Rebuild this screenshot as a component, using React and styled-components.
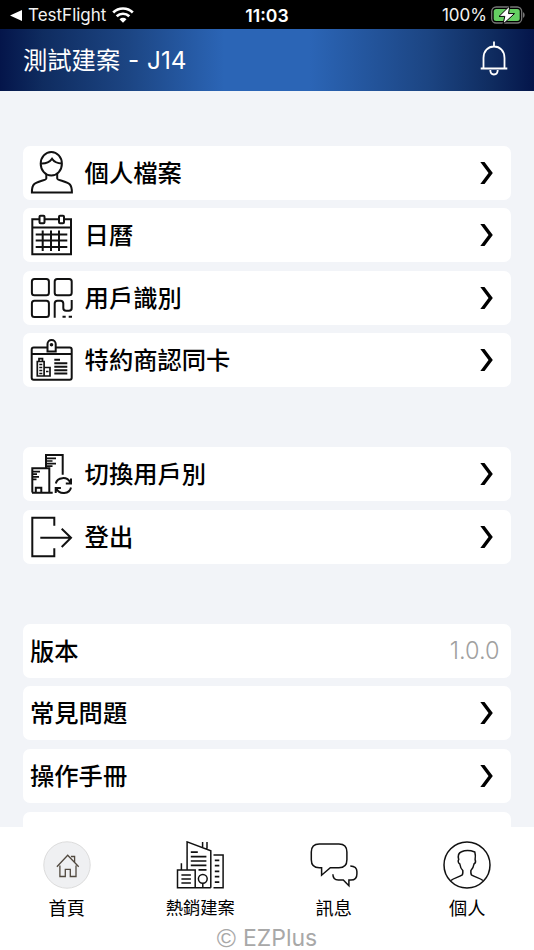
import styled, { createGlobalStyle } from "styled-components";

const GlobalStyle = createGlobalStyle`
  * {
    box-sizing: border-box;
  }
  body {
    margin: 0;
    background: #f2f4f8;
    font-family: Inter, "Noto Sans CJK TC", sans-serif;
    color: #000;
  }
`;

const Screen = styled.div`
  display: flex;
  flex-direction: column;
  height: 950px;
  overflow: hidden;
`;

const StatusBar = styled.div`
  flex: none;
  display: grid;
  grid-template-columns: 1fr auto 1fr;
  align-items: center;
  height: 29px;
  padding: 1px 9px 0 10px;
  background: #000;
  color: #fff;
  font-size: 17px;
`;

const StatusSide = styled.div`
  display: flex;
  align-items: center;
  justify-content: ${(props) => (props.$end ? "flex-end" : "flex-start")};
  gap: ${(props) => (props.$end ? "4px" : "6px")};
  color: #f2f2f2;
`;

const Time = styled.div`
  margin-right: 1px;
  font-size: 17.6px;
  font-weight: 600;
`;

const Header = styled.header`
  flex: none;
  display: flex;
  align-items: center;
  justify-content: space-between;
  height: 62px;
  padding: 0 26px 0 23px;
  background: linear-gradient(
    90deg,
    #04154a 0%,
    #0f2c60 8%,
    #1c4583 24%,
    #2b65b6 42%,
    #2b65b6 58%,
    #1c4583 80%,
    #0f2c60 92%,
    #04154a 100%
  );
`;

const Title = styled.h1`
  margin: 0;
  padding-bottom: 3px;
  color: #fff;
  font-size: 24.3px;
  font-weight: 370;
  word-spacing: 1px;
`;

const Content = styled.main`
  flex: 1;
  min-height: 0;
  overflow: hidden;
  padding: 54.7px 23px 0;
`;

const Group = styled.section`
  display: flex;
  flex-direction: column;
  gap: 8.6px;
  margin-bottom: 59.9px;
`;

const Row = styled.div`
  flex: none;
  display: flex;
  align-items: center;
  height: 54px;
  padding: 0 18.5px 0 7px;
  border-radius: 7px;
  background: #fff;
`;

const RowIcon = styled.svg`
  flex: none;
  width: 42px;
  height: 42px;
  margin-left: 0.6px;
  margin-right: 12px;
  overflow: visible;
  fill: none;
  stroke: #111;
  stroke-width: 2;
`;

const RowLabel = styled.span`
  flex: 1;
  font-size: 24.3px;
  font-weight: 500;
  line-height: 36px;
`;

const Version = styled.span`
  margin-right: -7px;
  color: #a0a0a0;
  font-size: 23.5px;
  font-weight: 350;
`;

const Footer = styled.footer`
  flex: none;
  height: 123px;
  padding-top: 14px;
  background: #fff;
`;

const Nav = styled.nav`
  display: grid;
  grid-template-columns: repeat(4, 1fr);
`;

const NavItem = styled.div`
  display: flex;
  flex-direction: column;
  align-items: center;
`;

const NavIcon = styled.svg`
  width: 48px;
  height: 48px;
  fill: none;
  stroke: #111;
  stroke-width: 1.5;
`;

const NavLabel = styled.span`
  margin-top: 6px;
  font-size: ${(props) => (props.$long ? "17.3px" : "18.2px")};
  font-weight: 370;
  line-height: 26px;
`;

const Copyright = styled.div`
  display: flex;
  align-items: center;
  justify-content: center;
  gap: 7px;
  height: 24px;
  margin-top: 5px;
  color: #a8a8a8;
  font-size: 23px;
  line-height: 24px;
`;

const CopyrightSign = styled.span`
  font-family: "Liberation Sans", sans-serif;
  font-size: 26px;
`;

const Chevron = () => (
  <svg width="13" height="22" viewBox="0 0 13 22">
    <path d="M0.3 0h4.2l8.3 11-8.3 11H0.3l8.2-11z" fill="#000" />
  </svg>
);

const icons = {
  profile: (
    <>
      <ellipse cx="20.3" cy="11.8" rx="10.6" ry="11.8" />
      <path d="M10 11.500c4.500.300 8.500-1.500 11-4.700 2 3 5.500 4.700 9.800 4.700" />
      <path d="M15.300 22v4.500c0 2-9 2.500-12.500 6C1 34.500.9 37 .9 40.500h40c0-3.500-.2-6-2-8-3.500-3.500-12.700-4-12.700-6V22" />
    </>
  ),
  calendar: (
    <>
      <path d="M8.300 5.200h-7v35H40v-35h-6.800M13.700 5.200h14M1.300 13.500H40" />
      <rect x="8.500" y="1.800" width="5" height="7.400" rx="1" />
      <rect x="28" y="1.800" width="5" height="7.400" rx="1" />
      <path d="M4.700 20.500h31.600M4.700 26.600h31.600M4.700 33h31.600M11.700 16.500V37M20 16.500V37M28 16.500V37" />
    </>
  ),
  qr: (
    <>
      <rect x="0.900" y="1.900" width="17" height="16.400" rx="2.500" />
      <rect x="23.700" y="1.900" width="17" height="16.400" rx="2.500" />
      <rect x="0.900" y="23.700" width="17" height="16.400" rx="2.500" />
      <path d="M23.700 40.800V26.500q0-2.800 2.800-2.800h3q2.800 0 2.800 2.800v4.500q0 2.800 2.800 2.800h2.800q2.800 0 2.800-2.800v-8M31.500 39.700h3.200M37.700 39.700H41" />
    </>
  ),
  card: (
    <>
      <path d="M16.300 8.500H2.700q-2 0-2 2v28.300q0 2 2 2h36q2 0 2-2V10.500q0-2-2-2H24.700M.7 14.900h40" />
      <path d="M16.500 12.600V5a4.100 4.100 0 0 1 8.200 0v7.600z" />
      <circle cx="20.500" cy="5.800" r="0.800" fill="#111" />
      <path
        strokeWidth="1.700"
        d="M6.300 37V22.500h6.800V37zM8 22v-2.400h3.500V22M13.100 28.500H19V37h-5.900M8.300 25.500h3M8.300 28.500h3M8.300 31.500h3M8.300 34.500h3M15 32.500h2.500"
      />
      <path d="M23.300 20.800H29M23.300 24.200H36.300M23.300 27.700H36.300M23.300 31.200H36.300M23.300 34.600H36.300" />
    </>
  ),
  swap: (
    <>
      <path d="M15 14.700V2h16.700v19.700M1.300 39.600V15.300h17v24.300M1 39.700h20.700M4.800 39.500v-4.700h5.500v4.700" />
      <path
        strokeWidth="1.700"
        d="M15.500 5.400H25M15.500 8H21.500M15.500 10.700H25M15.500 13.100H21.500M1.500 18.700H9M1.500 21.200H6M1.500 23.800H8M1.500 26.300H5.500"
      />
      <path d="M24.800 30.500c1.500-6.500 11.500-7.500 14.500-.8M40 25.500v5h-5.200M40 34.500c-1.500 6.700-11.500 7.700-14.700 1M24.700 40v-5h5.200" />
    </>
  ),
  logout: (
    <path d="M23.300 9.800V1.700h-22v38.600h22v-8M9.300 21.700h30.500M30.700 12.700l9.300 9-9.300 9.300" />
  ),
};

const navIcons = {
  home: (
    <>
      <circle cx="24" cy="24" r="23.200" fill="#eff0f2" stroke="#dcdcdc" strokeWidth="1" />
      <g stroke="#51493f" strokeWidth="1.300">
        <path d="M13.900 25.700 24.700 14.300l11 11.400M16.900 24.500v11h5.400v-7.200h5v7.200H33v-11M27.900 15.500h3.700v5.500" />
      </g>
    </>
  ),
  building: (
    <>
      <path d="M11.100 28.500V.9l23.700 8.800v37M26.600.9v5M31 .9v6.500M5.400 22.300V29M1.500 29h17.700v17.700H1.500zM19 46.700h15.800M37.500 14h9.600v32.700h-9.600" />
      <path
        strokeWidth="1.700"
        d="M14.800 11.200h7M14.800 15.600h15.600M14.800 20h15.600M14.800 24.400h15.600M22.500 28.900h8M5.400 34h9.500M5.400 38h9.500M5.400 42h9.500M38.800 19.300h4.500M38.800 24.700h4.500M38.800 30.300h4.500M38.800 35.700h4.500M38.800 41.100h4.500"
      />
      <circle cx="26.800" cy="37.800" r="4.400" />
      <path d="M26.800 42.200v4.500" />
    </>
  ),
  chat: (
    <path d="M11.600 26.700H9.300q-8 0-8-8V11q0-8 8-8h19.600q8 0 8 8v7.700q0 8-8 8h-8.600l-8.700 7.500zM40.300 24.900q6.600.3 6.600 5.500v2.500q0 6.100-6 6.100h-2v5.700L33.300 39h-5q-5.400 0-5.400-5.700" />
  ),
  person: (
    <>
      <circle cx="24" cy="24" r="23" />
      <path d="M7.900 39.500c3-2.500 7.500-3.200 11-5.300.9-.6 1.100-2.200.9-4.700-2-1.800-2.600-4-3-6.500-1.700-.8-2-3.200-1.100-4.500-.8-3-.3-6.500 2.800-7.700 4-1.700 9.500-1.200 13.300.2.800 2.500.7 5 .3 7.500.7 1.700.3 3.700-1.100 4.500-.4 2.500-1.200 4.700-3.100 6.500-.2 2.500 0 4.100.9 4.700 3.500 2.100 8 2.800 11.200 5.300" />
    </>
  ),
};

const Bell = () => (
  <svg width="28" height="38" viewBox="0 0 28 38" fill="none" stroke="#fff" strokeWidth="1.800">
    <path d="M14 .5v5M3.500 27V17C3.500 10 8 5.500 14 5.500S24.500 10 24.500 17V27M.7 27.500h26.600M10.300 29c0 6 7.400 6 7.400 0" />
  </svg>
);

const Wifi = () => (
  <svg width="22" height="16" viewBox="0 0 22 16" fill="none" stroke="#fff" strokeWidth="2.700">
    <path d="M1.200 5.500a14 14 0 0 1 19.600 0M4.700 9.300a9 9 0 0 1 12.600 0" />
    <path d="M11 15.800 7.500 12.300a5 5 0 0 1 7 0z" fill="#fff" stroke="none" />
  </svg>
);

const Battery = () => (
  <svg width="34" height="18" viewBox="0 0 34 18">
    <rect x="0.700" y="1" width="30" height="16" rx="4.500" fill="none" stroke="#777" strokeWidth="1.300" />
    <rect x="2.700" y="3" width="26" height="12" rx="2.500" fill="#65cf63" />
    <path d="M32 6v6q1.700-.8 1.700-3T32 6z" fill="#777" />
    <path d="M18.800-.2 8 10.400h5.800L12 18.200 23.500 7.600h-6z" fill="#fff" stroke="#000" strokeWidth="1" />
  </svg>
);

const groups = [
  [
    { label: "個人檔案", icon: "profile" },
    { label: "日曆", icon: "calendar" },
    { label: "用戶識別", icon: "qr" },
    { label: "特約商認同卡", icon: "card" },
  ],
  [
    { label: "切換用戶別", icon: "swap" },
    { label: "登出", icon: "logout" },
  ],
  [
    { label: "版本", value: "1.0.0" },
    { label: "常見問題" },
    { label: "操作手冊" },
    { label: "" },
  ],
];

const tabs = [
  { label: "首頁", icon: "home" },
  { label: "熱銷建案", icon: "building" },
  { label: "訊息", icon: "chat" },
  { label: "個人", icon: "person" },
];

export default function App() {
  return (
    <>
      <GlobalStyle />
      <Screen>
        <StatusBar>
          <StatusSide>
            <svg width="12" height="11" viewBox="0 0 12 11">
              <path d="M0 5.500 12 0v11z" fill="#fff" />
            </svg>
            <span>TestFlight</span>
            <Wifi />
          </StatusSide>
          <Time>11:03</Time>
          <StatusSide $end>
            <span>100%</span>
            <Battery />
          </StatusSide>
        </StatusBar>
        <Header>
          <Title>測試建案 - J14</Title>
          <Bell />
        </Header>
        <Content>
          {groups.map((rows, i) => (
            <Group key={i}>
              {rows.map((row, j) => (
                <Row key={j}>
                  {row.icon && <RowIcon viewBox="0 0 42 42">{icons[row.icon]}</RowIcon>}
                  <RowLabel>{row.label}</RowLabel>
                  {row.value ? <Version>{row.value}</Version> : row.label && <Chevron />}
                </Row>
              ))}
            </Group>
          ))}
        </Content>
        <Footer>
          <Nav>
            {tabs.map((tab) => (
              <NavItem key={tab.icon}>
                <NavIcon viewBox="0 0 48 48">{navIcons[tab.icon]}</NavIcon>
                <NavLabel $long={tab.label.length > 2}>{tab.label}</NavLabel>
              </NavItem>
            ))}
          </Nav>
          <Copyright>
            <CopyrightSign>©</CopyrightSign>
            <span>EZPlus</span>
          </Copyright>
        </Footer>
      </Screen>
    </>
  );
}
